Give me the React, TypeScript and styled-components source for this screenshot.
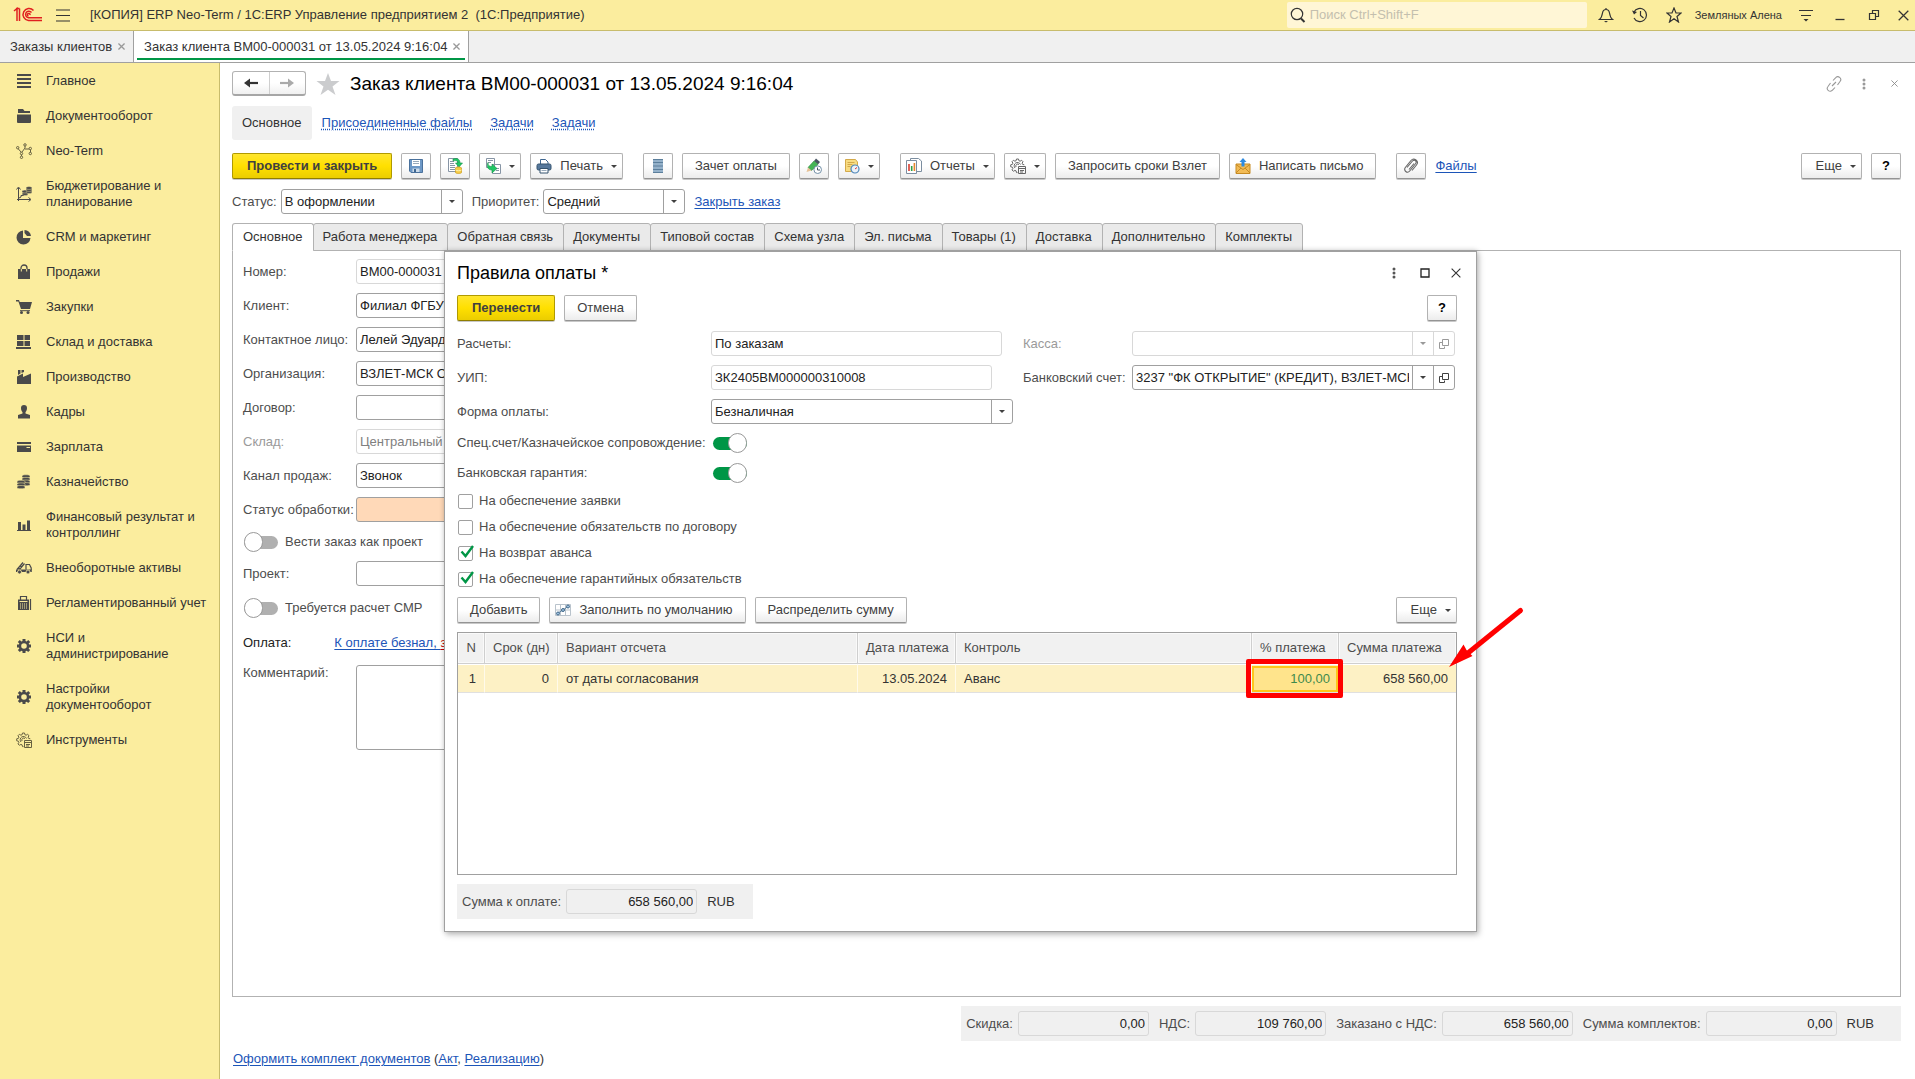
import React, { useState } from "react";
import styled, { createGlobalStyle, css } from "styled-components";

const c = {
  yellow: "#fbed9e",
  yellowLine: "#c8bc6c",
  grey: "#f0f0f0",
  line: "#a0a0a0",
  soft: "#d8d8d8",
  text: "#333333",
  label: "#4d4d4d",
  off: "#9a9a9a",
  link: "#1c55b8",
  green: "#009646",
};

const Global = createGlobalStyle`
  *, *::before, *::after { box-sizing: border-box; }
  body { margin: 0; background: #fff; }
  body, button, input, select, textarea, table {
    font-family: "Liberation Sans", Arial, sans-serif;
    font-size: 13px;
    line-height: 16px;
    color: ${c.text};
  }
  svg { display: block; flex: none; }
`;

/* ---------- shell ---------- */

const Page = styled.div`
  display: flex;
  flex-direction: column;
  min-height: 100vh;
  overflow: hidden;
`;

const TitleBar = styled.header`
  display: flex;
  align-items: center;
  height: 31px;
  padding: 0 0 0 13px;
  background: ${c.yellow};
  border-bottom: 1px solid ${c.yellowLine};
`;

const BareButton = styled.button<{ $w?: number }>`
  display: flex;
  flex: none;
  align-items: center;
  justify-content: center;
  width: ${(p) => p.$w ?? 34}px;
  height: 24px;
  padding: 0;
  border: 0;
  background: none;
`;

const AppName = styled.div`
  flex: 1;
  padding-left: 7px;
  white-space: pre;
`;

const SearchBox = styled.label`
  display: flex;
  align-items: center;
  gap: 4px;
  width: 300px;
  height: 26px;
  margin-right: 2px;
  padding-left: 3px;
  border-radius: 2px;
  background: #fff6d6;
`;

const SearchInput = styled.input`
  flex: 1;
  min-width: 0;
  padding: 0;
  border: 0;
  outline: 0;
  background: none;
  &::placeholder { color: #c4bfae; opacity: 1; }
`;

const UserName = styled.span`
  padding: 0 7px 0 4px;
  font-size: 11px;
`;

const WindowTabs = styled.nav`
  display: flex;
  height: 32px;
  background: ${c.grey};
  border-bottom: 1px solid ${c.line};
`;

const WindowTab = styled.div<{ $active?: boolean }>`
  display: flex;
  align-items: center;
  padding: 0 3px 0 10px;
  border-right: 1px solid ${c.line};
  ${(p) =>
    p.$active &&
    css`
      background: #fff;
      box-shadow: inset 3px 0 #fff, inset -3px 0 #fff, inset 0 -2px #fff, inset 0 -4px ${c.green};
    `}
`;

const WindowTabLink = styled.a`
  color: ${c.text};
  text-decoration: none;
`;

const Body = styled.div`
  display: flex;
  flex: 1;
`;

const SideBar = styled.nav`
  flex: none;
  width: 220px;
  padding-top: 1px;
  background: ${c.yellow};
  border-right: 1px solid ${c.yellowLine};
`;

const SideItem = styled.a`
  display: flex;
  align-items: center;
  gap: 14px;
  padding: 9px 8px 10px 16px;
  color: ${c.text};
  text-decoration: none;
  white-space: pre-line;
`;

const Main = styled.main`
  display: flex;
  flex: 1;
  flex-direction: column;
  min-width: 0;
  padding: 8px 14px 12px 12px;
`;

/* ---------- shared parts ---------- */

const Row = styled.div<{ $gap?: number }>`
  display: flex;
  align-items: center;
  gap: ${(p) => p.$gap ?? 9}px;
`;

const Spacer = styled.span`
  flex: 1;
`;

const Heading = styled.h1<{ $small?: boolean }>`
  flex: 1;
  margin: 0;
  font-size: ${(p) => (p.$small ? 18 : 19)}px;
  font-weight: 400;
  line-height: 24px;
  color: #000;
`;

const Button = styled.button<{ $primary?: boolean; $icon?: boolean; $start?: boolean; $menu?: boolean }>`
  display: flex;
  flex: none;
  align-items: center;
  justify-content: center;
  gap: 8px;
  height: 26px;
  min-width: 30px;
  padding: 0 12px;
  border: 1px solid #b2b2b2;
  border-bottom-color: #949494;
  border-radius: 2px;
  background: linear-gradient(#fff 50%, #ececec);
  box-shadow: 0 1px 0 #c8c8c8;
  color: #404040;
  white-space: nowrap;
  ${(p) => p.$menu && css`padding: 0 5px 0 14px;`}
  ${(p) => p.$icon && css`padding-left: 5px;`}
  ${(p) => p.$start && css`margin-left: 11px;`}
  ${(p) =>
    p.$primary &&
    css`
      padding: 0 14px;
      border-color: #b09a00;
      border-bottom-color: #8f7d00;
      background: linear-gradient(#ffe62e, #ffe000 50%, #ebcd00);
      font-weight: 700;
    `}
`;

const SquareButton = styled(Button)`
  width: 30px;
  padding: 0;
  font-weight: ${(p) => (p.$icon ? 400 : 700)};
  color: ${(p) => (p.$icon ? "#404040" : "#000")};
`;

const Caret = styled.span`
  width: 0;
  height: 0;
  border: 3px solid transparent;
  border-top-color: currentColor;
  border-bottom: 0;
`;

const Link = styled.a<{ $dotted?: boolean; $red?: boolean }>`
  color: ${(p) => (p.$red ? "#c00000" : c.link)};
  text-decoration: underline ${(p) => (p.$dotted ? "dotted" : "solid")};
  text-underline-offset: 2px;
`;

const Label = styled.label<{ $off?: boolean; $dark?: boolean }>`
  flex: none;
  color: ${(p) => (p.$off ? c.off : p.$dark ? "#222" : c.label)};
  white-space: nowrap;
`;

const Frame = styled.div<{ $w?: number; $muted?: boolean; $fill?: string }>`
  display: flex;
  flex: none;
  width: ${(p) => (p.$w ? `${p.$w}px` : "100%")};
  height: 25px;
  border: 1px solid ${(p) => (p.$muted ? c.soft : c.line)};
  border-radius: 3px;
  background: ${(p) => p.$fill ?? "#fff"};
  overflow: hidden;
`;

const inputText = css`
  flex: 1;
  min-width: 0;
  height: 23px;
  padding: 0 3px;
  border: 0;
  outline: 0;
  background: none;
  color: #222;
`;

const Input = styled.input<{ $right?: boolean }>`
  ${inputText}
  text-align: ${(p) => (p.$right ? "right" : "left")};
  &:disabled { color: #808080; }
`;

const Select = styled.select`
  ${inputText}
  appearance: none;
  opacity: 1;
`;

const FieldButton = styled.span<{ $muted?: boolean }>`
  display: flex;
  flex: none;
  align-items: center;
  justify-content: center;
  width: 21px;
  border-left: 1px solid ${(p) => (p.$muted ? c.soft : c.line)};
  color: ${(p) => (p.$muted ? "#999" : "#404040")};
`;

/* ---------- order form ---------- */

const HistoryButtons = styled.div`
  display: flex;
  width: 74px;
  height: 25px;
  border: 1px solid #b2b2b2;
  border-bottom: 2px solid #a6a6a6;
  border-radius: 3px;
  background: linear-gradient(#fff 50%, #f0f0f0);
  button { flex: 1; height: 22px; }
  button + button { border-left: 1px solid #cfcfcf; }
`;

const HeadRow = styled(Row)`
  height: 25px;
`;

const HeadTools = styled.div`
  display: flex;
  margin-right: -8px;
`;

const SectionRow = styled(Row)`
  margin-top: 10px;
  height: 34px;
`;

const CurrentSection = styled.span`
  display: flex;
  align-items: center;
  height: 34px;
  margin-right: -8px;
  padding: 0 10px;
  border-radius: 3px;
  background: ${c.grey};
`;

const ToolRow = styled(Row)`
  margin-top: 13px;
`;

const StatusRow = styled(Row)`
  margin-top: 10px;
`;

const Tabs = styled.div`
  position: relative;
  z-index: 1;
  display: flex;
  height: 28px;
  margin: 9px 0 -1px;
`;

const Tab = styled.button<{ $active?: boolean }>`
  height: 28px;
  margin-right: -1px;
  padding: 0 10px 1px ${(p) => (p.$active ? 10 : 9)}px;
  border: 1px solid #b2b2b2;
  border-bottom-color: ${(p) => (p.$active ? "#fff" : "#b2b2b2")};
  border-radius: 3px 3px 0 0;
  background: ${(p) => (p.$active ? "#fff" : "#eaeaea")};
`;

const Panel = styled.section`
  position: relative;
  flex: 1;
  padding: 8px 10px;
  border: 1px solid #b2b2b2;
`;

const Form = styled.form`
  display: grid;
  grid-template-columns: 104px 560px;
  column-gap: 9px;
  row-gap: 9px;
  align-items: center;
`;

const OptionRow = styled.div<{ $h: number }>`
  grid-column: 1 / -1;
  display: flex;
  align-items: center;
  gap: 7px;
  height: ${(p) => p.$h}px;
  padding-left: 1px;
`;

const PaymentRow = styled.div`
  grid-column: 1 / -1;
  display: flex;
  align-items: center;
  height: 27px;
  gap: 43px;
`;

const Comment = styled.textarea`
  width: 100%;
  height: 85px;
  border: 1px solid ${c.line};
  border-radius: 3px;
  resize: none;
`;

const CommentLabel = styled(Label)`
  align-self: start;
`;

const Totals = styled.div<{ $own?: boolean }>`
  display: flex;
  align-items: center;
  align-self: ${(p) => (p.$own ? "flex-start" : "flex-end")};
  gap: 5px;
  height: 35px;
  margin-top: 9px;
  padding: 0 ${(p) => (p.$own ? 18 : 27)}px 0 5px;
  background: ${c.grey};
  div + label, div + span { margin-left: 5px; }
`;

const Documents = styled.p`
  margin: 10px 0 0;
  padding-left: 1px;
`;

/* ---------- switches and ticks ---------- */

const Switch = styled.input`
  position: relative;
  flex: none;
  appearance: none;
  width: 34px;
  height: 20px;
  margin: 0;
  &::before {
    content: "";
    position: absolute;
    inset: 4px 0 3px;
    border-radius: 7px;
    background: #b0b0b0;
  }
  &::after {
    content: "";
    position: absolute;
    left: 0;
    top: 0;
    width: 19px;
    height: 20px;
    border: 1px solid #999;
    border-radius: 10px;
    background: #fff;
  }
  &:checked::before { background: ${c.green}; }
  &:checked::after { left: 15px; }
`;

const Tick = styled.span`
  position: relative;
  display: flex;
  input {
    appearance: none;
    width: 15px;
    height: 15px;
    margin: 0;
    border: 1px solid ${c.line};
    border-radius: 2px;
    background: #fff;
  }
  svg {
    position: absolute;
    left: 2px;
    top: -1px;
    pointer-events: none;
  }
  input:not(:checked) + svg { display: none; }
`;

const TickRow = styled.div`
  display: flex;
  align-items: center;
  gap: 6px;
  height: 26px;
  padding-left: 1px;
`;

/* ---------- dialog ---------- */

const Dialog = styled.section`
  position: absolute;
  z-index: 2;
  left: 211px;
  top: -1px;
  display: flex;
  flex-direction: column;
  width: 1033px;
  padding: 8px 19px 12px 12px;
  border: 1px solid ${c.line};
  border-top-width: 2px;
  background: #fff;
  box-shadow: 2px 3px 6px rgba(0, 0, 0, 0.22), 0 0 5px rgba(0, 0, 0, 0.15);
`;

const DialogHead = styled.div`
  display: flex;
  align-items: center;
  height: 26px;
  margin-right: -14px;
`;

const DialogTools = styled(Row)`
  margin-top: 9px;
`;

const DialogGrid = styled.div`
  display: grid;
  grid-template-columns: 254px 302px 119px 323px;
  row-gap: 9px;
  align-items: center;
  margin-top: 10px;
  label:nth-of-type(even) { padding-left: 10px; }
`;

const SwitchRow = styled.div`
  display: grid;
  grid-template-columns: 256px 34px;
  align-items: center;
  height: 30px;
`;

const Switches = styled.div`
  margin-top: 4px;
`;

const TableTools = styled(Row)`
  margin-top: 5px;
`;

const TableBox = styled.div`
  height: 243px;
  margin-top: 9px;
  border: 1px solid ${c.line};
`;

const Table = styled.table`
  width: 100%;
  table-layout: fixed;
  border-spacing: 0;
`;

const Th = styled.th<{ $right?: boolean }>`
  height: 31px;
  padding: 0 8px;
  border-bottom: 1px solid #cfcfcf;
  border-right: 1px solid #cfcfcf;
  background: #f1f1f1;
  box-shadow: inset 0 0 0 1px #fafafa;
  color: ${c.label};
  font-weight: 400;
  text-align: ${(p) => (p.$right ? "right" : "left")};
  white-space: nowrap;
  &:last-child { border-right: 0; }
`;

const Td = styled.td<{ $right?: boolean }>`
  position: relative;
  height: 29px;
  padding: 0 8px;
  border-top: 1px solid #fff;
  border-bottom: 1px solid #e0e0e0;
  border-right: 1px solid #fffaea;
  background: #fdf1c5;
  background-clip: padding-box;
  text-align: ${(p) => (p.$right ? "right" : "left")};
  &:last-child { border-right: 0; }
`;

const CellFocus = styled.span`
  display: block;
  height: 26px;
  margin: 0 -8px;
  padding: 3px 6px;
  border: 2px solid #ffc61a;
  background: #ffe48c;
  color: #3e8a4c;
`;

const RedFrame = styled.span`
  position: absolute;
  z-index: 1;
  inset: -6px -5px -6px -6px;
  border: 5px solid #f00;
  border-radius: 2px;
`;

const Arrow = styled.svg`
  position: absolute;
  z-index: 3;
  left: 1003px;
  top: 353px;
`;

/* ---------- icons ---------- */

const S = ({ children, w = 16, h = 16, vb = "0 0 16 16" }: { children: React.ReactNode; w?: number; h?: number; vb?: string }) => (
  <svg width={w} height={h} viewBox={vb} fill="none" aria-hidden="true">{children}</svg>
);
const D = "#4a4a4a";

const Cross = ({ size = 8, color = "#999", w = 1.5 }) => (
  <S w={size} h={size} vb="0 0 8 8"><path d="M.5.5l7 7M7.5.5l-7 7" stroke={color} strokeWidth={w} /></S>
);
const Dots = ({ color = "#666" }) => (
  <S w={4} h={14} vb="0 0 4 14"><g fill={color}><circle cx="2" cy="3" r="1.5" /><circle cx="2" cy="7" r="1.5" /><circle cx="2" cy="11" r="1.5" /></g></S>
);
const OpenIcon = () => (
  <S w={10} h={10} vb="0 0 10 10"><path d="M3.5.5h6v6h-6zM3.5 3.500h-3v6h5v-2" stroke="currentColor" /></S>
);
const GearDoc = ({ color = "#666" }) => (
  <S>
    <path d="M6.500 1h2l.4 1.700 1.200.5 1.500-.9 1.400 1.400-.9 1.500.5 1.200 1.700.4M6.500 1l-.4 1.700-1.200.5-1.500-.9L2 3.700l.9 1.500-.5 1.200L.7 6.800v2l1.700.4.5 1.200-.9 1.500 1.400 1.400 1.500-.9 1.200.5.4 1.700h1" stroke={color} />
    <path d="M5 10a3.300 3.300 0 1 1 5.500-3.500M6 9a2 2 0 0 1 3-2.500" stroke={color} />
    <path d="M8.500 8.500h7v7h-7zM8.500 10.500h7M10 12.500h4M10 14h3" stroke={color} fill="none" />
  </S>
);
const Coins = ({ x, y, n }: { x: number; y: number; n: number }) => (
  <g fill={D}>{Array.from({ length: n }, (_, i) => <path key={i} d={`M${x} ${y + i * 2.6}c0-1.600 8-1.600 8 0v1c0 1.300-8 1.300-8 0z`} stroke={c.yellow} strokeWidth=".5" />)}</g>
);
const Gear = () => (
  <S><path fill={D} fillRule="evenodd" d="M6.500 1h3v2l1.200.5L12.200 2l2 2-1.500 1.400.5 1.100h1.800v3h-1.800l-.5 1.200 1.500 1.400-2 2-1.500-1.400-1.200.5v1.800h-3v-1.800l-1.200-.5L3.800 14.100l-2-2 1.500-1.400L2.800 9.500H1v-3h1.800l.5-1.100L1.800 4l2-2 1.500 1.500L6.500 3zM8 5.200a2.800 2.800 0 1 0 0 5.600 2.800 2.800 0 0 0 0-5.600z" /></S>
);

const sideIcons = {
  main: <S><path fill={D} d="M1 1h14v2H1zM1 5h14v2H1zM1 9h14v2H1zM1 13h14v2H1z" /></S>,
  docs: <S><path fill={D} d="M2 1h5l1.500 2H14v2H2zM1 6.500h14V14a1 1 0 0 1-1 1H2a1 1 0 0 1-1-1z" /></S>,
  neo: <S><g stroke="#666040"><path d="M1.500 5l4 4.500V13M6 9l3-4V2M9 6h5.500v5" /><g fill={c.yellow}><circle cx="1.700" cy="4.700" r="1.200" /><circle cx="9" cy="1.900" r="1.200" /><circle cx="14.300" cy="5.500" r="1.200" /><circle cx="5.500" cy="10.500" r="1.200" /><circle cx="5.500" cy="14.300" r="1.200" /><circle cx="14.300" cy="10.500" r="1.200" /></g></g></S>,
  budget: <S><path d="M2.500 15V2M.5 3.500L2.500 1l2 2.500M1 13.500h13M12.500 11.500l2.500 2-2.500 2M3 12l2-1V9.500h3" stroke={D} /><g fill={D} stroke={c.yellow} strokeWidth=".4"><ellipse cx="9" cy="8" rx="3" ry="1.500" /><ellipse cx="9" cy="5.500" rx="3" ry="1.500" /><ellipse cx="13" cy="6" rx="3" ry="1.500" /><ellipse cx="13" cy="4" rx="3" ry="1.500" /><ellipse cx="13" cy="2" rx="3" ry="1.500" /></g></S>,
  crm: <S><path fill={D} d="M7 1.500V9h7.500A7 7 0 1 1 7 1.500zM8.500 1A6.500 6.500 0 0 1 15 7h-4L8.500 4z" /></S>,
  sales: <S><path fill={D} d="M2 5h12v10H2z" /><path d="M5 7V4a3 3 0 0 1 6 0v3" stroke={D} strokeWidth="1.300" /><path d="M5.300 5v2.500M10.700 5v2.500" stroke={c.yellow} /></S>,
  buy: <S><path fill={D} d="M0 1h3l.7 2H16l-2 7H5L2.400 2.500H0z" /><path d="M4 11.700h10" stroke={D} /><circle cx="5.500" cy="13.500" r="1.500" fill={D} /><circle cx="12" cy="13.500" r="1.500" fill={D} /></S>,
  store: <S><path fill={D} d="M1 1h6.500v5H1zM8.500 1H14v5H8.500zM1 7h6.500v5H1zM8.500 7H14v5H8.500zM0 13h15v2H0z" /></S>,
  factory: <S><path fill={D} d="M1 15V7.500l6-3V8l8-3.500V15zM2 1h2.500v3.500L2 6zM5.500 1H8v2L5.500 4z" /></S>,
  staff: <S><path fill={D} d="M5 4a3 3 0 0 1 6 0c0 2-.8 3.500-1.500 4v1.500L14 11v3.500H2V11l4.500-1.500V8C5.800 7.500 5 6 5 4z" /></S>,
  salary: <S><path fill={D} d="M1 3h14v2H1zM1 6.500h14V13H1z" /><path d="M10.500 8.500H14" stroke={c.yellow} /></S>,
  treasury: <S><Coins x={6} y={2} n={4} /><Coins x={1} y={7.5} n={3} /></S>,
  finance: <S><path fill={D} d="M1 13h14v1H1zM2 5h3v8H2zM6.500 7.500h3V13h-3zM11 3.500h3V13h-3z" /></S>,
  assets: <S><path d="M1 9.500l6-7M3.500 9.500l5-6M2.500 8l1.500 1.500M4.500 6L6 7.500M10 9.500V4.500h3.500L15.200 8v2" stroke={D} strokeWidth="1.200" /><path fill={D} d="M0 9.500h15.800V12H0z" /><g fill={D} stroke={c.yellow} strokeWidth=".8"><circle cx="3.500" cy="12" r="2" /><circle cx="12" cy="12" r="2" /></g></S>,
  account: <S><path d="M4.500 5V1.500h6V5M14.500 4v11" stroke={D} strokeWidth="1.200" /><path fill={D} d="M2 4.500h11V15H2z" /><path d="M3.500 6.500h8" stroke={c.yellow} /><path d="M4 9h7.500M4 11h7.500M4 13h7.500" stroke={c.yellow} strokeDasharray="1 1" /></S>,
  gear: <Gear />,
  tools: <GearDoc color="#666040" />,
};

const ToolIcon = {
  save: <S><path d="M1.500 1.500h13v13H3L1.500 13z" fill="#6d98c6" stroke="#4a719c" /><path d="M4 2h8v6H4z" fill="#fff" /><path d="M5 3.500h6M5 5.500h6" stroke="#9ab" /><path d="M4.500 10.500h7V14h-7z" fill="#cddbe9" /><path d="M6 11h2v3H6z" fill="#3f6690" /></S>,
  post: <S><path d="M1.500.5h9v13h-9z" fill="#fff" stroke="#8795a5" /><path d="M3 3.500h4M3 5.500h4M3 7.500h5M3 9.500h5M3 11.500h5" stroke="#8795a5" /><path d="M6 1c4-1.500 7 0 7 4h2.500L12 9 8.500 5H11c0-2-2-3-5-2z" fill="#1fc764" stroke="#169048" strokeWidth=".6" /><path d="M8.500 10c0-1.300 6-1.300 6 0v4.500c0 1.300-6 1.300-6 0z" fill="#f6cc45" stroke="#c99a1c" strokeWidth=".7" /><path d="M8.500 12c1 1 5 1 6 0" stroke="#fff3b0" /></S>,
  basis: <S><path d="M1.500.5h8v9h-8zM7.500 6.500h8v9h-8z" fill="#fff" stroke="#8795a5" /><path d="M3 2.500h5M3 4.500h3M11 10.500h3M11 12.500h3" stroke="#8795a5" /><path d="M3 4.500c0 3 1 4 4 4V6l5 4.500L7 15v-3c-4 0-5.500-3-4-7.500z" fill="#1fc764" stroke="#169048" strokeWidth=".6" /></S>,
  print: <S><path d="M4.500 6V1.500h5L12 4v2" fill="#fff" stroke="#3f6690" /><rect x="1" y="6" width="14" height="6" rx="1.500" fill="#56789c" stroke="#34536f" /><path d="M4 10.500h8v4.500H4z" fill="#fff" stroke="#34536f" /><path d="M5.500 12.500h5" stroke="#9ab" /></S>,
  list: <S><path d="M3 1h10v14H3z" fill="#94b1ca" /><path d="M3 1.500h10M3 4.500h10M3 8h10M3 11.500h10M3 14.500h10" stroke="#5c7f9c" /></S>,
  pencil: <S><path d="M10 .5L14 4l-2 2.500L8 3z" fill="#4a5563" /><path d="M8 3l4 3.500-6.500 6L2 9.500z" fill="#45b556" stroke="#2d8a3e" strokeWidth=".6" /><path d="M2 9.500l3.500 3L.5 14z" fill="#e6c195" /><circle cx="11.700" cy="11.700" r="3.800" fill="#fff" stroke="#7390a8" /><path d="M11.500 9.500v2.500h2.500" stroke="#456" /></S>,
  note: <S><path d="M1.500 1.500h10L13.500 4v9.500h-12z" fill="#f8dc82" stroke="#d3a94a" /><path d="M3.500 4.500h7M3.500 6.500h5M3.500 8.500h3" stroke="#d3a94a" /><circle cx="11" cy="11" r="4" fill="#e9f1f8" stroke="#4e86b8" strokeWidth="1.200" /><path d="M11 11l2-1.500" stroke="#d33" /></S>,
  report: <S><path d="M4.500.5h8L15.500 3v10.500h-11z" fill="#fff" stroke="#7c8ea0" /><path d="M.5 2.500h10v13H.5z" fill="#fff" stroke="#7c8ea0" /><path d="M3 6v7" stroke="#d83a2e" strokeWidth="1.600" /><path d="M5.700 8v5" stroke="#2f9e44" strokeWidth="1.600" /><path d="M8.400 5v8" stroke="#e8862a" strokeWidth="1.600" /></S>,
  mail: <S><path d="M1 6h14v9.500H1z" fill="#f2bb55" stroke="#c68a23" /><path d="M1 6.500l7 5 7-5M1 15l5-5M15 15l-5-5" stroke="#c68a23" /><path d="M8 0l3.500 4h-2v4.500h-3V4h-2z" fill="#2f8be0" /></S>,
  clip: <S><path d="M4 9.500L9.500 3a2 2 0 0 1 3.200 2.500l-6 7.500a2.800 2.800 0 0 1-4.400-3.500L8 2.500a3.500 3.500 0 0 1 5.500 4.500L9 12.500M11 5.500l-5 6" stroke="#666" strokeWidth="1.100" /></S>,
  fill: <S><path d="M.5 2.500h15v11H.5zM5.500 2.500v11M10.500 2.500v11M.5 8h15" stroke="#b9c3cc" fill="#fff" /><path d="M3 11l5-3 5-3.500" stroke="#5c7f9c" /><g fill="#9cc0dd" stroke="#41688a"><circle cx="3" cy="11.500" r="1.500" /><circle cx="8" cy="8" r="1.500" /><circle cx="13" cy="4.500" r="1.500" /></g></S>,
};

/* ---------- data ---------- */

const sections: [keyof typeof sideIcons, string][] = [
  ["main", "Главное"],
  ["docs", "Документооборот"],
  ["neo", "Neo-Term"],
  ["budget", "Бюджетирование и\nпланирование"],
  ["crm", "CRM и маркетинг"],
  ["sales", "Продажи"],
  ["buy", "Закупки"],
  ["store", "Склад и доставка"],
  ["factory", "Производство"],
  ["staff", "Кадры"],
  ["salary", "Зарплата"],
  ["treasury", "Казначейство"],
  ["finance", "Финансовый результат и\nконтроллинг"],
  ["assets", "Внеоборотные активы"],
  ["account", "Регламентированный учет"],
  ["gear", "НСИ и\nадминистрирование"],
  ["gear", "Настройки\nдокументооборот"],
  ["tools", "Инструменты"],
];

const orderTabs = [
  "Основное", "Работа менеджера", "Обратная связь", "Документы", "Типовой состав", "Схема узла",
  "Эл. письма", "Товары (1)", "Доставка", "Дополнительно", "Комплекты",
];

type FieldSpec = { id: string; label: string; value: string; muted?: boolean; off?: boolean; fill?: string };
const orderFields: FieldSpec[] = [
  { id: "number", label: "Номер:", value: "ВМ00-000031", muted: true },
  { id: "client", label: "Клиент:", value: "Филиал ФГБУ" },
  { id: "contact", label: "Контактное лицо:", value: "Лелей Эдуард" },
  { id: "company", label: "Организация:", value: "ВЗЛЕТ-МСК ООО" },
  { id: "contract", label: "Договор:", value: "" },
  { id: "store", label: "Склад:", value: "Центральный", muted: true, off: true },
  { id: "channel", label: "Канал продаж:", value: "Звонок" },
  { id: "processing", label: "Статус обработки:", value: "", fill: "#ffd9b8" },
];

const orderTotals = [
  ["discount", "Скидка:", "0,00"],
  ["vat", "НДС:", "109 760,00"],
  ["ordered", "Заказано с НДС:", "658 560,00"],
  ["kits", "Сумма комплектов:", "0,00"],
];

const guarantees: [string, string, boolean][] = [
  ["bid", "На обеспечение заявки", false],
  ["duty", "На обеспечение обязательств по договору", false],
  ["advance", "На возврат аванса", true],
  ["warranty", "На обеспечение гарантийных обязательств", true],
];

const columns: [string, number | undefined, boolean?][] = [
  ["N", 27, true],
  ["Срок (дн)", 73],
  ["Вариант отсчета", 300],
  ["Дата платежа", 98],
  ["Контроль", 296],
  ["% платежа", 87],
  ["Сумма платежа", undefined],
];

/* ---------- composed parts ---------- */

const Drop = ({ id, value, w }: { id: string; value: string; w: number }) => (
  <Frame $w={w}>
    <Select id={id} defaultValue={value}><option>{value}</option></Select>
    <FieldButton><Caret /></FieldButton>
  </Frame>
);

const Field = ({ f }: { f: FieldSpec }) => (
  <>
    <Label htmlFor={f.id} $off={f.off}>{f.label}</Label>
    <Frame $muted={f.muted} $fill={f.fill}>
      <Input id={f.id} defaultValue={f.value} disabled={f.off} readOnly={f.muted} />
    </Frame>
  </>
);

const Sum = ({ id, label, value }: { id: string; label: string; value: string }) => (
  <>
    <Label htmlFor={id}>{label}</Label>
    <Frame $w={131} $muted $fill={c.grey}><Input id={id} $right readOnly value={value} /></Frame>
  </>
);

function PaymentDialog() {
  return (
    <Dialog role="dialog" aria-labelledby="rules-title">
      <DialogHead>
        <Heading as="h2" $small id="rules-title">Правила оплаты *</Heading>
        <BareButton $w={31} aria-label="Меню"><Dots color="#555" /></BareButton>
        <BareButton $w={31} aria-label="Развернуть"><S w={10} h={10} vb="0 0 10 10"><path d="M1 1h8v8H1z" stroke="#222" strokeWidth="1.300" /></S></BareButton>
        <BareButton $w={31} aria-label="Закрыть"><Cross size={10} color="#333" w={0.9} /></BareButton>
      </DialogHead>
      <DialogTools>
        <Button $primary>Перенести</Button>
        <Button>Отмена</Button>
        <Spacer />
        <SquareButton aria-label="Справка">?</SquareButton>
      </DialogTools>
      <DialogGrid>
        <Label htmlFor="calc">Расчеты:</Label>
        <Frame $w={291} $muted><Input id="calc" readOnly value="По заказам" /></Frame>
        <Label htmlFor="till" $off>Касса:</Label>
        <Frame $muted><Input id="till" disabled /><FieldButton $muted><Caret /></FieldButton><FieldButton $muted><OpenIcon /></FieldButton></Frame>
        <Label htmlFor="uip">УИП:</Label>
        <Frame $w={281} $muted><Input id="uip" readOnly value="ЗК2405ВМ000000310008" /></Frame>
        <Label htmlFor="bank">Банковский счет:</Label>
        <Frame><Input id="bank" defaultValue={'3237 "ФК ОТКРЫТИЕ" (КРЕДИТ), ВЗЛЕТ-МСК'} /><FieldButton><Caret /></FieldButton><FieldButton><OpenIcon /></FieldButton></Frame>
        <Label htmlFor="payform">Форма оплаты:</Label>
        <Drop id="payform" value="Безналичная" w={302} />
      </DialogGrid>
      <Switches>
        <SwitchRow><Label htmlFor="special">Спец.счет/Казначейское сопровождение:</Label><Switch id="special" type="checkbox" role="switch" defaultChecked /></SwitchRow>
        <SwitchRow><Label htmlFor="guarantee">Банковская гарантия:</Label><Switch id="guarantee" type="checkbox" role="switch" defaultChecked /></SwitchRow>
      </Switches>
      {guarantees.map(([id, label, on]) => (
        <TickRow key={id}>
          <Tick>
            <input id={id} type="checkbox" defaultChecked={on} />
            <S w={14} h={14} vb="0 0 14 14"><path d="M1.500 6.500L5.500 11 13 1" stroke={c.green} strokeWidth="2.400" /></S>
          </Tick>
          <Label htmlFor={id}>{label}</Label>
        </TickRow>
      ))}
      <TableTools>
        <Button>Добавить</Button>
        <Button $icon>{ToolIcon.fill}Заполнить по умолчанию</Button>
        <Button>Распределить сумму</Button>
        <Spacer />
        <Button $menu>Еще<Caret /></Button>
      </TableTools>
      <TableBox>
        <Table>
          <colgroup>{columns.map(([name, w]) => <col key={name} width={w} />)}</colgroup>
          <thead><tr>{columns.map(([name, , right]) => <Th key={name} $right={right}>{name}</Th>)}</tr></thead>
          <tbody>
            <tr>
              <Td $right>1</Td>
              <Td $right>0</Td>
              <Td>от даты согласования</Td>
              <Td $right>13.05.2024</Td>
              <Td>Аванс</Td>
              <Td $right><CellFocus>100,00</CellFocus><RedFrame /></Td>
              <Td $right>658 560,00</Td>
            </tr>
          </tbody>
        </Table>
      </TableBox>
      <Totals $own>
        <Sum id="topay" label="Сумма к оплате:" value="658 560,00" />
        <span>RUB</span>
      </Totals>
      <Arrow width="80" height="66" viewBox="0 0 80 66" aria-hidden="true">
        <path d="M72.500 5.500L20 48" stroke="#f00" strokeWidth="5" strokeLinecap="round" />
        <path d="M1 62L15.500 39.500l3 5.500 6 6z" fill="#f00" />
      </Arrow>
    </Dialog>
  );
}

export default function App() {
  const [tab, setTab] = useState(orderTabs[0]);
  return (
    <Page>
      <Global />
      <TitleBar>
        <svg width="30" height="16" viewBox="0 0 30 16" fill="none" stroke="#e02020" aria-label="1С">
          <path d="M1 4l3-2.500V14M6.500 1.500V14M3 1.500h3.500" strokeWidth="1.500" />
          <path d="M20.500 3.500A6 6 0 1 0 15.500 13.500H29M18.500 5.500a3.300 3.300 0 1 0-3 5.300H29M17 8a1.300 1.300 0 1 0-1.500 1" strokeWidth="1.500" />
        </svg>
        <BareButton $w={40} aria-label="Главное меню"><S w={14} h={13} vb="0 0 14 13"><path d="M0 1h14M0 6.500h14M0 12h14" stroke="#333" strokeWidth="1.200" /></S></BareButton>
        <AppName>{"[КОПИЯ] ERP Neo-Term / 1C:ERP Управление предприятием 2  (1С:Предприятие)"}</AppName>
        <SearchBox>
          <S><circle cx="7" cy="7" r="5.700" stroke="#333" strokeWidth="1.200" /><path d="M11 11.500l3.500 3.500" stroke="#333" strokeWidth="2" /></S>
          <SearchInput aria-label="Поиск" placeholder="Поиск Ctrl+Shift+F" />
        </SearchBox>
        <BareButton aria-label="Оповещения"><S><path d="M1.500 12.500C3.500 11 4 9 4.500 6c.3-2 1.500-3.500 3.500-3.500S11.200 4 11.500 6c.5 3 1 5 3 6.500zM8 1v1.500" stroke="#333" strokeWidth="1.200" /><path d="M6 14h4l-2 1.500z" fill="#333" /></S></BareButton>
        <BareButton aria-label="История"><S><path d="M2 5A6.600 6.600 0 1 1 2 11M8.500 4v4.500l3 2.500" stroke="#333" strokeWidth="1.200" /><path d="M0 3.500l2 4 3-2.500z" fill="#333" /></S></BareButton>
        <BareButton aria-label="Избранное"><S><path d="M8 1l2 5h5l-4 3.500 1.500 5.500L8 11.800 3.500 15 5 9.500 1 6h5z" stroke="#333" strokeWidth="1.200" /></S></BareButton>
        <UserName>Земляных Алена</UserName>
        <BareButton aria-label="Настройки"><S><path d="M1 3.500h14M3 8.500h10" stroke="#333" strokeWidth="1.200" /><path d="M5.500 12h5L8 14.500z" fill="#333" /></S></BareButton>
        <BareButton aria-label="Свернуть"><S><path d="M3.500 12.500h9" stroke="#333" strokeWidth="1.300" /></S></BareButton>
        <BareButton aria-label="Восстановить"><S><path d="M3.500 6.500h6v6h-6zM6.500 6V3.500h6v6H10" stroke="#333" strokeWidth="1.200" /></S></BareButton>
        <BareButton $w={24} aria-label="Закрыть"><Cross size={11} color="#333" w={0.9} /></BareButton>
      </TitleBar>

      <WindowTabs>
        <WindowTab><WindowTabLink href="#orders">Заказы клиентов</WindowTabLink><BareButton $w={18} aria-label="Закрыть вкладку"><Cross size={7} /></BareButton></WindowTab>
        <WindowTab $active><WindowTabLink href="#order">Заказ клиента ВМ00-000031 от 13.05.2024 9:16:04</WindowTabLink><BareButton $w={18} aria-label="Закрыть вкладку"><Cross size={7} /></BareButton></WindowTab>
      </WindowTabs>

      <Body>
        <SideBar>
          {sections.map(([icon, name]) => <SideItem key={name} href="#section">{sideIcons[icon]}{name}</SideItem>)}
        </SideBar>

        <Main>
          <HeadRow $gap={10}>
            <HistoryButtons>
              <BareButton aria-label="Назад"><S><path d="M15 8H4" stroke="#333" strokeWidth="2.200" /><path d="M1 8l6-4.500v9z" fill="#333" /></S></BareButton>
              <BareButton aria-label="Вперед"><S><path d="M1 8h11" stroke="#aaa" strokeWidth="2.200" /><path d="M15 8L9 3.500v9z" fill="#aaa" /></S></BareButton>
            </HistoryButtons>
            <S w={24} h={24} vb="0 0 24 24"><path d="M12 1l3 8h8.500l-7 5.500 3 8.500-7.500-5.300L4.500 23l3-8.500L.5 9H9z" fill="#cbccce" /></S>
            <Heading>Заказ клиента ВМ00-000031 от 13.05.2024 9:16:04</Heading>
            <HeadTools>
              <BareButton $w={30} aria-label="Ссылка"><S><path d="M6 10l4-4M7 4.500l2.500-2.700a2.800 2.800 0 0 1 4.500 3.700L11.500 9M9 11.500l-2.500 2.700A2.800 2.800 0 0 1 2 10.500L4.500 7" stroke="#999" strokeWidth="1.100" /></S></BareButton>
              <BareButton $w={30} aria-label="Меню"><Dots color="#999" /></BareButton>
              <BareButton $w={30} aria-label="Закрыть"><Cross size={7} color="#888" w={1} /></BareButton>
            </HeadTools>
          </HeadRow>

          <SectionRow $gap={18}>
            <CurrentSection>Основное</CurrentSection>
            <Link $dotted href="#files">Присоединенные файлы</Link>
            <Link $dotted href="#tasks">Задачи</Link>
            <Link $dotted href="#tasks2">Задачи</Link>
          </SectionRow>

          <ToolRow>
            <Button $primary>Провести и закрыть</Button>
            <SquareButton $icon aria-label="Записать">{ToolIcon.save}</SquareButton>
            <SquareButton $icon aria-label="Провести">{ToolIcon.post}</SquareButton>
            <Button $icon $menu aria-label="Создать на основании">{ToolIcon.basis}<Caret /></Button>
            <Button $icon $menu>{ToolIcon.print}Печать<Caret /></Button>
            <SquareButton $icon $start aria-label="Реестр">{ToolIcon.list}</SquareButton>
            <Button>Зачет оплаты</Button>
            <SquareButton $icon aria-label="Запланировать">{ToolIcon.pencil}</SquareButton>
            <Button $icon $menu aria-label="Напоминание">{ToolIcon.note}<Caret /></Button>
            <Button $icon $menu $start>{ToolIcon.report}Отчеты<Caret /></Button>
            <Button $icon $menu aria-label="Сервис"><GearDoc /><Caret /></Button>
            <Button>Запросить сроки Взлет</Button>
            <Button $icon>{ToolIcon.mail}Написать письмо</Button>
            <SquareButton $icon $start aria-label="Прикрепить">{ToolIcon.clip}</SquareButton>
            <Link href="#attached">Файлы</Link>
            <Spacer />
            <Button $menu>Еще<Caret /></Button>
            <SquareButton aria-label="Справка">?</SquareButton>
          </ToolRow>

          <StatusRow>
            <Row $gap={4}><Label htmlFor="status">Статус:</Label><Drop id="status" value="В оформлении" w={182} /></Row>
            <Row $gap={4}><Label htmlFor="priority">Приоритет:</Label><Drop id="priority" value="Средний" w={142} /></Row>
            <Link href="#close">Закрыть заказ</Link>
          </StatusRow>

          <Tabs role="tablist">
            {orderTabs.map((name) => (
              <Tab key={name} role="tab" aria-selected={tab === name} $active={tab === name} onClick={() => setTab(name)}>{name}</Tab>
            ))}
          </Tabs>
          <Panel>
            <Form>
              {orderFields.map((f) => <Field key={f.id} f={f} />)}
              <OptionRow $h={21}><Switch id="asproject" type="checkbox" role="switch" /><Label htmlFor="asproject">Вести заказ как проект</Label></OptionRow>
              <Field f={{ id: "project", label: "Проект:", value: "" }} />
              <OptionRow $h={25}><Switch id="smr" type="checkbox" role="switch" /><Label htmlFor="smr">Требуется расчет СМР</Label></OptionRow>
              <PaymentRow>
                <Label as="span" $dark>Оплата:</Label>
                <span><Link href="#payment">К оплате безнал, </Link><Link href="#payment-state" $red>з</Link></span>
              </PaymentRow>
              <CommentLabel htmlFor="comment">Комментарий:</CommentLabel>
              <Comment id="comment" />
            </Form>
            <PaymentDialog />
          </Panel>

          <Totals>
            {orderTotals.map(([id, label, value]) => <Sum key={id} id={id} label={label} value={value} />)}
            <span>RUB</span>
          </Totals>
          <Documents>
            <Link href="#docs">Оформить комплект документов</Link> (<Link href="#act">Акт</Link>, <Link href="#sale">Реализацию</Link>)
          </Documents>
        </Main>
      </Body>
    </Page>
  );
}
